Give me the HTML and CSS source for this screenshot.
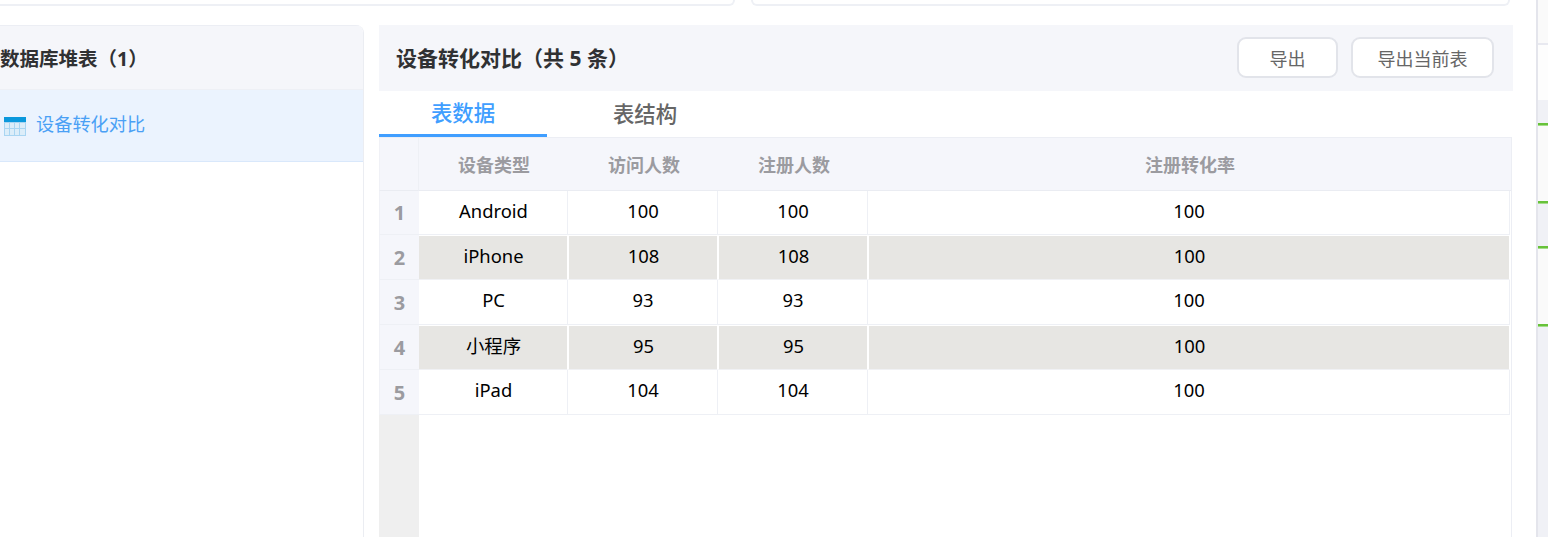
FILE: index.html
```html
<!DOCTYPE html>
<html lang="zh-CN">
<head>
<meta charset="utf-8">
<title>设备转化对比</title>
<link rel="stylesheet" href="styles.css">
</head>
<body>
<div class="page">
  <main class="main">
    <div class="top-row">
      <div class="top-card top-card-a"></div>
      <div class="top-card top-card-b"></div>
    </div>
    <div class="content">
      <aside class="side">
        <div class="side-head"><span class="side-title">数据库堆表（1）</span></div>
        <div class="side-item">
          <svg class="table-icon" width="22" height="19" viewBox="0 0 22 19">
            <rect x="0" y="0" width="22" height="19" fill="#a9d5f2"/>
            <rect x="0" y="0" width="22" height="5" fill="#0b98dc"/>
            <g fill="#dcedf9">
              <rect x="1" y="6" width="4" height="5"/><rect x="6" y="6" width="4" height="5"/><rect x="11" y="6" width="4" height="5"/><rect x="16" y="6" width="5" height="5"/>
              <rect x="1" y="12" width="4" height="6"/><rect x="6" y="12" width="4" height="6"/><rect x="11" y="12" width="4" height="6"/><rect x="16" y="12" width="5" height="6"/>
            </g>
          </svg>
          <span>设备转化对比</span>
        </div>
      </aside>
      <section class="detail">
        <header class="detail-head">
          <h1 class="detail-title">设备转化对比（共 5 条）</h1>
          <div class="actions">
            <button class="btn btn-short">导出</button>
            <button class="btn btn-long">导出当前表</button>
          </div>
        </header>
        <nav class="tabs">
          <div class="tab tab-active">表数据</div>
          <div class="tab tab-second">表结构</div>
        </nav>
        <div class="grid">
          <div class="row row-head">
            <div class="idx"></div>
            <div class="cell c1">设备类型</div>
            <div class="cell c2">访问人数</div>
            <div class="cell c3">注册人数</div>
            <div class="cell c4">注册转化率</div>
          </div>
          <div class="row row-first">
            <div class="idx">1</div>
            <div class="cell c1">Android</div><div class="cell c2">100</div><div class="cell c3">100</div><div class="cell c4">100</div>
          </div>
          <div class="row row-alt">
            <div class="idx">2</div>
            <div class="cell c1">iPhone</div><div class="cell c2">108</div><div class="cell c3">108</div><div class="cell c4">100</div>
          </div>
          <div class="row">
            <div class="idx">3</div>
            <div class="cell c1">PC</div><div class="cell c2">93</div><div class="cell c3">93</div><div class="cell c4">100</div>
          </div>
          <div class="row row-alt">
            <div class="idx">4</div>
            <div class="cell c1">小程序</div><div class="cell c2">95</div><div class="cell c3">95</div><div class="cell c4">100</div>
          </div>
          <div class="row">
            <div class="idx">5</div>
            <div class="cell c1">iPad</div><div class="cell c2">104</div><div class="cell c3">104</div><div class="cell c4">100</div>
          </div>
          <div class="grid-rest"><div class="rest-idx"></div></div>
        </div>
      </section>
    </div>
  </main>
  <aside class="rail">
    <div class="band b-plain h43"></div>
    <div class="band b-line h2"></div>
    <div class="band b-white h55"></div>
    <div class="band b-grey h23"></div>
    <div class="band b-green"></div>
    <div class="band b-plain h75"></div>
    <div class="band b-green"></div>
    <div class="band b-grey h42"></div>
    <div class="band b-green"></div>
    <div class="band b-plain h75"></div>
    <div class="band b-green"></div>
    <div class="band b-grey fill"></div>
  </aside>
</div>
</body>
</html>
```
FILE: styles.css
```css
* { box-sizing: border-box; }
html, body { margin: 0; padding: 0; background: #fff; }
body { font-family: "Noto Sans", "Noto Sans CJK SC", sans-serif; color: #000; }
.page { display: flex; width: 1548px; height: 537px; overflow: hidden; }
.main { width: 1536px; flex: none; display: flex; flex-direction: column; }

.top-row { display: flex; gap: 16px; height: 6px; margin-bottom: 19px; padding-right: 26px; }
.top-card { height: 6px; background: #fff; border: 2px solid #eef0f5; border-top: 0; border-radius: 0 0 12px 12px; }
.top-card-a { width: 735px; border-left: 0; border-bottom-left-radius: 0; }
.top-card-b { width: 760px; }

.content { flex: 1; display: flex; gap: 15px; min-height: 0; }

.side { width: 364px; flex: none; border-right: 1px solid #ebedf2; border-top-right-radius: 8px; overflow: hidden; }
.side-head { height: 65px; display: flex; align-items: center; padding-bottom: 1px; background: #f5f6fa; border-top: 1px solid #eceef4; border-bottom: 1px solid #eef0f5; font-size: 19.5px; font-weight: 700; color: #303133; white-space: nowrap; }
.side-item { height: 72px; display: flex; align-items: center; gap: 10px; padding-left: 4px; padding-bottom: 6px; background: #ebf3fe; border-bottom: 1px solid #d9e8fb; font-size: 18.2px; color: #4aa0f5; }
.table-icon { flex: none; margin-top: 7px; }

.detail { width: 1134px; flex: none; display: flex; flex-direction: column; }
.detail-head { height: 66px; flex: none; display: flex; align-items: center; justify-content: space-between; padding: 0 19px 1px 17px; background: #f5f6fa; }
.detail-title { margin: 0; padding-bottom: 2px; font-size: 21px; font-weight: 700; color: #303133; white-space: nowrap; }
.actions { display: flex; gap: 13px; }
.btn { height: 41px; padding: 0; background: #fff; border: 2px solid #e2e4ea; border-radius: 9px; font: inherit; font-size: 18px; color: #666; }
.btn-short { width: 101px; }
.btn-long { width: 143px; }

.tabs { height: 46px; flex: none; display: flex; }
.tab { width: 168px; height: 46px; display: flex; align-items: center; justify-content: center; padding-bottom: 3px; font-size: 21.4px; font-weight: 500; color: #666; }
.tab-second { width: 196px; }
.tab-active { color: #409eff; border-bottom: 3px solid #409eff; }

.grid { flex: 1; min-height: 0; width: 1133px; display: flex; flex-direction: column; border: 1px solid #eceef4; border-bottom: 0; border-left: 0; }
.row { display: flex; height: 45px; flex: none; padding-right: 1px; }
.row-first { height: 44px; }
.idx { width: 40px; flex: none; display: flex; align-items: center; justify-content: center; background: #f5f6fb; border-bottom: 1px solid #eef0f5; border-left: 1px solid #f0f1f6; font-size: 20px; font-weight: 700; color: #9b9ba0; }
.cell { display: flex; align-items: center; justify-content: center; padding: 0 0 5px 1px; font-size: 18.4px; color: #000; background-clip: padding-box; border-right: 1px solid #eef0f5; border-bottom: 1px solid #eef0f5; }
.c1 { width: 149px; }
.c2, .c3 { width: 150px; }
.c4 { flex: 1; }

.row-head { height: 53px; padding-right: 0; background: #f5f6fb; }
.row-head .idx { border-right: 1px solid #eef0f5; }
.row-head .idx, .row-head .cell { border-bottom: 1px solid #eaecf2; }
.row-head .cell { border-right: 0; padding: 0; font-size: 18px; font-weight: 700; color: #9b9ba0; }
.row-head .c1 { width: 150px; }

.row-alt .cell { background-color: #e7e6e3; border-top: 1px solid #fff; border-right: 1px solid #fff; border-bottom: 1px solid #f0f1f4; }
.row-alt .cell + .cell { border-left: 1px solid #fff; }

.grid-rest { flex: 1; min-height: 0; }
.rest-idx { width: 40px; height: 100%; background: #efefef; }

.rail { flex: 1; display: flex; flex-direction: column; border-left: 2px solid #e4e5ec; }
.band { flex: none; }
.b-plain { background: #fafafa; }
.b-white { background: #fdfdfd; }
.b-line { background: #e8e9f0; }
.b-grey { background: #f0f1f6; }
.b-green { height: 3px; background: #67c23a; border-bottom: 1px solid #a4dc8a; }
.h2 { height: 2px; }
.h23 { height: 23px; }
.h42 { height: 42px; }
.h43 { height: 43px; }
.h55 { height: 55px; }
.h75 { height: 75px; }
.fill { flex: 1; }
```
